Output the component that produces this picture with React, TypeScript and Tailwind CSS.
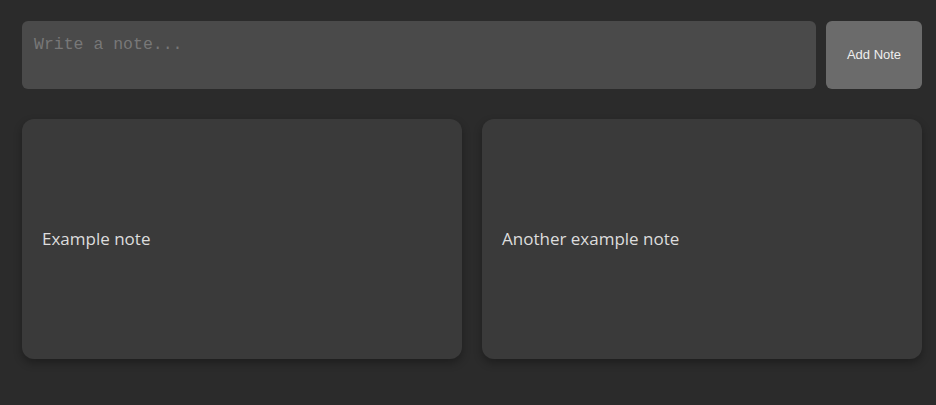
import React from "react";

export default function App() {
  const notes = ["Example note", "Another example note"];
  return (
    <div className="min-h-[405px] w-full bg-[#2b2b2b] pl-[22px] pr-[14px] pt-[21px]">
      <div className="flex gap-[10px]">
        <textarea
          placeholder="Write a note..."
          className="h-[68px] flex-1 resize-none rounded-[6px] bg-[#4a4a4a] px-[12px] pt-[12px] pb-[8px] text-[16.5px] text-[#ddd] outline-none placeholder:text-[#787878]"
          style={{ fontFamily: '"Liberation Mono", monospace' }}
        />
        <button
          className="h-[68px] w-[96px] rounded-[6px] bg-[#6b6b6b] text-[13px] text-[#eee]"
          style={{ fontFamily: '"Liberation Sans", Arial, sans-serif' }}
        >
          Add Note
        </button>
      </div>
      <div className="mt-[30px] grid grid-cols-2 gap-[20px]">
        {notes.map((n) => (
          <div
            key={n}
            className="flex h-[240px] items-center rounded-[12px] bg-[#3a3a3a] px-[20px] text-[17px] text-[#ddd] shadow-[0_4px_8px_rgba(0,0,0,0.3)]"
            style={{ fontFamily: '"Open Sans", "Noto Sans", sans-serif' }}
          >
            {n}
          </div>
        ))}
      </div>
    </div>
  );
}
